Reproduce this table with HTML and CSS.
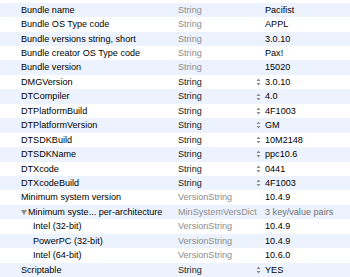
FILE: index.html
```html
<!DOCTYPE html>
<html lang="en">
<head>
  <meta charset="UTF-8" />
  <title>Info.plist</title>
  <link rel="stylesheet" href="styles.css">
</head>
<body>
  <div class="plist">

    <div class="row"><span class="key">Bundle name</span><span class="type dim">String</span><span class="step"></span><span class="val">Pacifist</span></div>
    <div class="row"><span class="key">Bundle OS Type code</span><span class="type dim">String</span><span class="step"></span><span class="val">APPL</span></div>
    <div class="row"><span class="key">Bundle versions string, short</span><span class="type dim">String</span><span class="step"></span><span class="val">3.0.10</span></div>
    <div class="row"><span class="key">Bundle creator OS Type code</span><span class="type dim">String</span><span class="step"></span><span class="val">Pax!</span></div>
    <div class="row"><span class="key">Bundle version</span><span class="type dim">String</span><span class="step"></span><span class="val">15020</span></div>

    <!-- editable entries get the stepper -->
    <div class="row"><span class="key">DMGVersion</span><span class="type">String</span><span class="step"><svg width="5" height="8" viewBox="0 0 5 8"><path d="M2.5 0.5L4.5 3H0.5Z M2.5 7.5L4.5 5H0.5Z"/></svg></span><span class="val">3.0.10</span></div>
    <div class="row"><span class="key">DTCompiler</span><span class="type">String</span><span class="step"><svg width="5" height="8" viewBox="0 0 5 8"><path d="M2.5 0.5L4.5 3H0.5Z M2.5 7.5L4.5 5H0.5Z"/></svg></span><span class="val">4.0</span></div>
    <div class="row"><span class="key">DTPlatformBuild</span><span class="type">String</span><span class="step"><svg width="5" height="8" viewBox="0 0 5 8"><path d="M2.5 0.5L4.5 3H0.5Z M2.5 7.5L4.5 5H0.5Z"/></svg></span><span class="val">4F1003</span></div>
    <div class="row"><span class="key">DTPlatformVersion</span><span class="type">String</span><span class="step"><svg width="5" height="8" viewBox="0 0 5 8"><path d="M2.5 0.5L4.5 3H0.5Z M2.5 7.5L4.5 5H0.5Z"/></svg></span><span class="val">GM</span></div>
    <div class="row"><span class="key">DTSDKBuild</span><span class="type">String</span><span class="step"><svg width="5" height="8" viewBox="0 0 5 8"><path d="M2.5 0.5L4.5 3H0.5Z M2.5 7.5L4.5 5H0.5Z"/></svg></span><span class="val">10M2148</span></div>
    <div class="row"><span class="key">DTSDKName</span><span class="type">String</span><span class="step"><svg width="5" height="8" viewBox="0 0 5 8"><path d="M2.5 0.5L4.5 3H0.5Z M2.5 7.5L4.5 5H0.5Z"/></svg></span><span class="val">ppc10.6</span></div>
    <div class="row"><span class="key">DTXcode</span><span class="type">String</span><span class="step"><svg width="5" height="8" viewBox="0 0 5 8"><path d="M2.5 0.5L4.5 3H0.5Z M2.5 7.5L4.5 5H0.5Z"/></svg></span><span class="val">0441</span></div>
    <div class="row"><span class="key">DTXcodeBuild</span><span class="type">String</span><span class="step"><svg width="5" height="8" viewBox="0 0 5 8"><path d="M2.5 0.5L4.5 3H0.5Z M2.5 7.5L4.5 5H0.5Z"/></svg></span><span class="val">4F1003</span></div>

    <div class="row"><span class="key">Minimum system version</span><span class="type dim">VersionString</span><span class="step"></span><span class="val">10.4.9</span></div>
    <div class="row"><span class="key open"><svg class="tri" width="6" height="5" viewBox="0 0 6 5"><path d="M0 0H6L3 5Z"/></svg>Minimum syste... per-architecture</span><span class="type dim">MinSystemVersDict</span><span class="step"></span><span class="val dim">3 key/value pairs</span></div>
    <div class="row"><span class="key child">Intel (32-bit)</span><span class="type dim">VersionString</span><span class="step"></span><span class="val">10.4.9</span></div>
    <div class="row"><span class="key child">PowerPC (32-bit)</span><span class="type dim">VersionString</span><span class="step"></span><span class="val">10.4.9</span></div>
    <div class="row"><span class="key child">Intel (64-bit)</span><span class="type dim">VersionString</span><span class="step"></span><span class="val">10.6.0</span></div>

    <div class="row"><span class="key">Scriptable</span><span class="type">String</span><span class="step"><svg width="5" height="8" viewBox="0 0 5 8"><path d="M2.5 0.5L4.5 3H0.5Z M2.5 7.5L4.5 5H0.5Z"/></svg></span><span class="val">YES</span></div>

  </div>
</body>
</html>
```

FILE: styles.css
```css
*{box-sizing:border-box}
body{
  margin:0;
  background:#fff;
  color:#000;
  font-family:'Liberation Sans',Arial,sans-serif;
  font-size:9.1px;
}
.plist{padding-top:2.7px;overflow:hidden;height:277px}

.row{
  display:grid;
  grid-template-columns:178px 77px 10px 1fr;
  align-items:center;
  height:14.45px;
  line-height:14.45px;
  white-space:nowrap;
}
.row:nth-child(odd){background:#edf3fe}

.key{padding-left:21px;overflow:hidden}
.key.open{padding-left:21px;display:flex;align-items:center}
.key.child{padding-left:33px}
.tri{fill:#8a8a8a;margin-right:1px;flex-shrink:0}

.type{color:#1a1a1a}
.dim{color:#8c8c8c}
.val.dim{color:#6e6e6e}

.step{display:flex;align-items:center;padding-left:1px}
.step svg{fill:#8e8e8e}
```
